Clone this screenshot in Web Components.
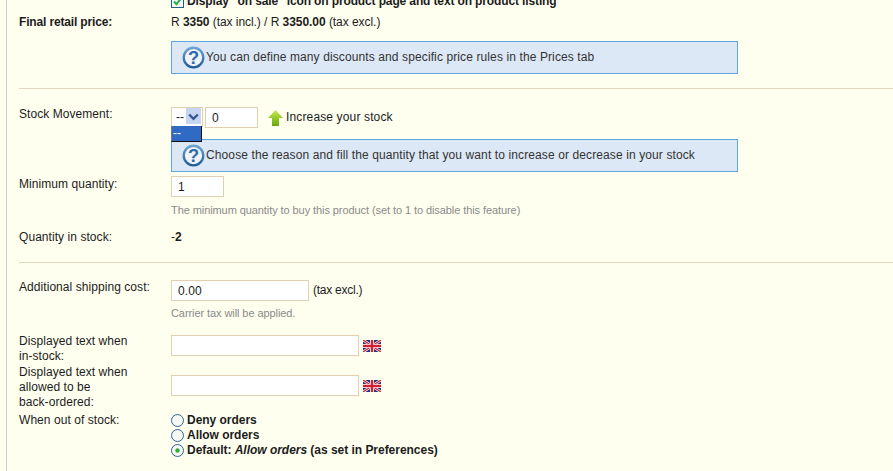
<!DOCTYPE html>
<html>
<head>
<meta charset="utf-8">
<title>Product prices and stock</title>
<style>
  html, body { margin: 0; height: 471px; overflow: hidden; background: #fffff0; }
  body { font: 12px/15px "Liberation Sans", Arial, sans-serif; color: #1c1c1c; }
</style>
</head>
<body>
<admin-panel>
  <form-row style="margin-top:-6px">
    <span slot="label"></span>
    <opt-line type="check" style="letter-spacing:-.13px">Display "on sale" icon on product page and text on product listing</opt-line>
  </form-row>
  <form-row style="margin-top:6px">
    <b slot="label" style="letter-spacing:-.16px">Final retail price:</b>
    <plain-text>R <b>3350</b> (tax incl.) / R <b>3350.00</b> (tax excl.)</plain-text>
  </form-row>
  <form-row style="margin-top:11px">
    <hint-box>You can define many discounts and specific price rules in the Prices tab</hint-box>
  </form-row>
  <form-sep style="margin-top:14px"></form-sep>
  <form-row style="margin-top:18px">
    <span slot="label">Stock Movement:</span>
    <stock-move>Increase your stock</stock-move>
  </form-row>
  <form-row style="margin-top:11px">
    <hint-box>Choose the reason and fill the quantity that you want to increase or decrease in your stock</hint-box>
  </form-row>
  <form-row style="margin-top:4px">
    <span slot="label" style="display:block;padding-top:1px">Minimum quantity:</span>
    <text-field style="width:53px">1</text-field>
  </form-row>
  <form-row style="margin-top:6px">
    <small-note>The minimum quantity to buy this product (set to 1 to disable this feature)</small-note>
  </form-row>
  <form-row style="margin-top:12px">
    <span slot="label">Quantity in stock:</span>
    <plain-text>-<b>2</b></plain-text>
  </form-row>
  <form-sep style="margin-top:17px"></form-sep>
  <form-row style="margin-top:17px">
    <span slot="label">Additional shipping cost:</span>
    <field-line><text-field style="width:138px">0.00</text-field><span style="letter-spacing:-.25px">(tax excl.)</span></field-line>
  </form-row>
  <form-row style="margin-top:5px">
    <small-note>Carrier tax will be applied.</small-note>
  </form-row>
  <form-row style="margin-top:13px">
    <span slot="label">Displayed text when<br>in-stock:</span>
    <field-line style="margin-top:1px"><text-field style="width:188px"></text-field><uk-flag></uk-flag></field-line>
  </form-row>
  <form-row style="margin-top:1px">
    <span slot="label">Displayed text when<br>allowed to be<br>back-ordered:</span>
    <field-line style="margin-top:10px"><text-field style="width:188px"></text-field><uk-flag></uk-flag></field-line>
  </form-row>
  <form-row style="margin-top:3px">
    <span slot="label">When out of stock:</span>
    <div>
      <opt-line type="radio">Deny orders</opt-line>
      <opt-line type="radio">Allow orders</opt-line>
      <opt-line type="radio" checked>Default: <i>Allow orders</i> (as set in Preferences)</opt-line>
    </div>
  </form-row>
</admin-panel>

<script>
function shadowEl(name, html) {
  customElements.define(name, class extends HTMLElement {
    connectedCallback() {
      if (this.shadowRoot) return;
      this.attachShadow({ mode: 'open' }).innerHTML = typeof html === 'function' ? html(this) : html;
    }
  });
}

shadowEl('admin-panel', `
  <style>
    :host { display: block; margin-left: 6px; height: 471px; box-sizing: border-box;
      border-left: 1px solid #ccc; padding-left: 12px; overflow: hidden; letter-spacing: .06px; }
  </style><slot></slot>`);

shadowEl('form-row', `
  <style>
    :host { display: grid; grid-template-columns: 152px 1fr; }
    .main { grid-column: 2; }
  </style>
  <div><slot name="label"></slot></div><div class="main"><slot></slot></div>`);

shadowEl('form-sep', `
  <style>:host { display: block; height: 1px; background: #e0d8c2; }</style>`);

shadowEl('plain-text', `<style>:host { display: block; letter-spacing: -.05px; }</style><slot></slot>`);

shadowEl('small-note', `
  <style>:host { display: block; font-size: 11px; color: #8a8a8a; letter-spacing: -.08px; }</style><slot></slot>`);

shadowEl('hint-box', `
  <style>
    :host { display: flex; align-items: center; box-sizing: border-box; width: 567px; height: 33px;
      padding-left: 10px; background: #dde8f6; border: 1px solid #5ba6df; color: #333; letter-spacing: .11px; }
    svg { flex: none; margin-right: 1px; }
  </style>
  <svg width="23" height="23" viewBox="0 0 24 24" aria-hidden="true">
    <defs><linearGradient id="r" x1="0" y1="0" x2="0" y2="1"><stop offset="0" stop-color="#6fa3d0"/><stop offset="1" stop-color="#1f5c98"/></linearGradient></defs>
    <circle cx="12" cy="12" r="10.2" fill="#eef4fa" stroke="url(#r)" stroke-width="2.4"/>
    <text x="12" y="19" text-anchor="middle" font-family="Liberation Sans" font-weight="700" font-size="19" fill="#2d6ca6">?</text>
  </svg>
  <slot></slot>`);

shadowEl('text-field', `
  <style>
    :host { display: block; box-sizing: border-box; height: 21px; padding: 3px 6px 0; flex: none;
      background: #fff; border: 1px solid #e0d0b1; line-height: 15px; letter-spacing: .1px; }
  </style><slot></slot>`);

shadowEl('field-line', `
  <style>
    :host { display: flex; align-items: center; gap: 4px; letter-spacing: 0; }
  </style><slot></slot>`);

shadowEl('uk-flag', `
  <style>:host { display: block; width: 18px; height: 12px; line-height: 0; }</style>
  <svg width="18" height="12" viewBox="0 0 18 12" aria-hidden="true">
    <rect width="18" height="12" fill="#27367f"/>
    <path d="M0 0L18 12M18 0L0 12" stroke="#fff" stroke-width="2.6"/>
    <path d="M0 0L18 12M18 0L0 12" stroke="#d0202f" stroke-width="1.2"/>
    <path d="M9 0V12M0 6H18" stroke="#fff" stroke-width="4"/>
    <path d="M9 0V12M0 6H18" stroke="#d0202f" stroke-width="2.4"/>
  </svg>`);

shadowEl('stock-move', `
  <style>
    :host { display: flex; align-items: flex-start; }
    .sel { position: relative; box-sizing: border-box; width: 32px; height: 20px; margin-right: 2px;
      background: #fff; border: 1px solid #e0d0b1; padding: 2px 0 0 4px; }
    .btn { position: absolute; right: 1px; top: 0; width: 15px; height: 16px; background: #c5d5f2; }
    .btn svg { display: block; margin: 5px 0 0 2px; }
    .list { position: absolute; left: -1px; top: 18px; width: 31px; height: 16px; box-sizing: border-box;
      background: #316ac5; color: #fff; border-right: 1px solid #111; border-bottom: 1px solid #111;
      border-left: 1px solid #777; padding-left: 1px; line-height: 14px; z-index: 2; }
    .qty { margin-right: 10px; }
    .arrow { margin: 3px 3px 0 0; flex: none; }
    .label { padding-top: 3px; letter-spacing: .14px; }
  </style>
  <div class="sel">--
    <div class="btn"><svg width="11" height="8" viewBox="0 0 11 8" aria-hidden="true"><path d="M1.2 1.5L5.5 5.8L9.8 1.5" fill="none" stroke="#39568f" stroke-width="2.4"/></svg></div>
    <div class="list">--</div>
  </div>
  <text-field class="qty" style="width:53px">0</text-field>
  <svg class="arrow" width="15" height="16" viewBox="0 0 15 16" aria-hidden="true">
    <defs><linearGradient id="a" x1="0" y1="0" x2="0" y2="1"><stop offset="0" stop-color="#c4ea4e"/><stop offset="1" stop-color="#6aa80c"/></linearGradient></defs>
    <path d="M7.5 0L15 8H11V16H4V8H0Z" fill="url(#a)"/>
  </svg>
  <div class="label"><slot></slot></div>`);

shadowEl('opt-line', el => {
  const checked = el.hasAttribute('checked');
  const mark = el.getAttribute('type') === 'check'
    ? `<svg width="13" height="13" viewBox="0 0 13 13" aria-hidden="true"><rect x=".5" y=".5" width="12" height="12" fill="#f4f8f4" stroke="#1f5c98"/><path d="M3 6.5L5.5 9.2L10 3.5" fill="none" stroke="#22b14c" stroke-width="2"/></svg>`
    : `<svg width="13" height="13" viewBox="0 0 13 13" aria-hidden="true"><circle cx="6.5" cy="6.5" r="6" fill="#f7f7f3" stroke="#2f6499"/>${checked ? '<circle cx="6.5" cy="6.5" r="2.2" fill="#2fae3c"/>' : ''}</svg>`;
  return `
  <style>
    :host { display: flex; align-items: center; height: 15px; gap: 3px; font-weight: 700; letter-spacing: -.03px; white-space: nowrap; }
    svg { flex: none; }
  </style>${mark}<span><slot></slot></span>`;
});
</script>
</body>
</html>
